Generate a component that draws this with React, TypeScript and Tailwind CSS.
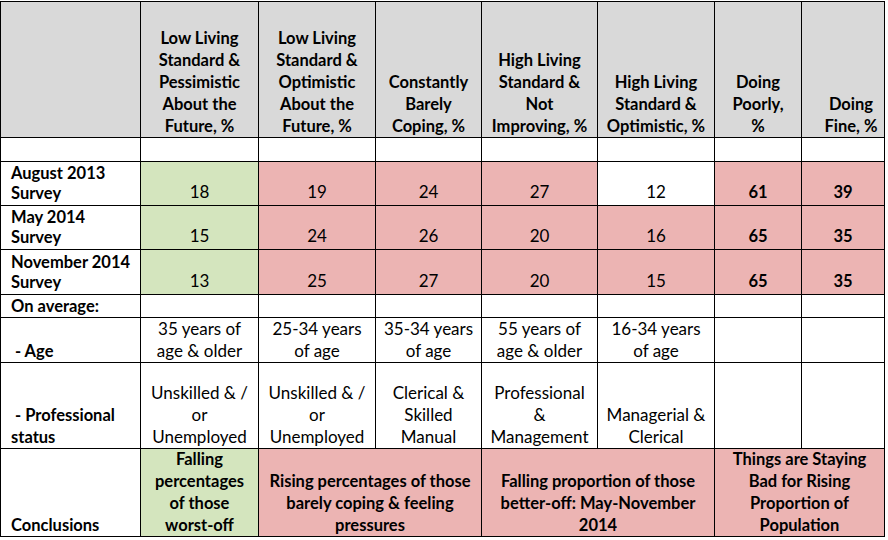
import React from "react";

const GRAY = "bg-[#d9d9d9]";
const GREEN = "bg-[#d4e5be]";
const PINK = "bg-[#ecb4b3]";
const WHITE = "bg-white";

const headers: string[][] = [
    ["Low Living", "Standard &", "Pessimistic", "About the", "Future, %"],
    ["Low Living", "Standard &", "Optimistic", "About the", "Future, %"],
    ["Constantly", "Barely", "Coping, %"],
    ["High Living", "Standard &", "Not", "Improving, %"],
    ["High Living", "Standard &", "Optimistic, %"],
    ["Doing", "Poorly,", "%"],
    ["Doing", "Fine, %"],
];

const surveys = [
    { label: ["August 2013", "Survey"], values: [18, 19, 24, 27, 12, 61, 39], colors: [GREEN, PINK, PINK, PINK, WHITE, PINK, PINK] },
    { label: ["May 2014", "Survey"], values: [15, 24, 26, 20, 16, 65, 35], colors: [GREEN, PINK, PINK, PINK, PINK, PINK, PINK] },
    { label: ["November 2014", "Survey"], values: [13, 25, 27, 20, 15, 65, 35], colors: [GREEN, PINK, PINK, PINK, PINK, PINK, PINK] },
];

const ages: string[][] = [
    ["35 years of", "age & older"],
    ["25-34 years", "of age"],
    ["35-34 years", "of age"],
    ["55 years of", "age & older"],
    ["16-34 years", "of age"],
    [],
    [],
];

const professions: string[][] = [
    ["Unskilled & /", "or", "Unemployed"],
    ["Unskilled & /", "or", "Unemployed"],
    ["Clerical &", "Skilled", "Manual"],
    ["Professional", "&", "Management"],
    ["Managerial &", "Clerical"],
    [],
    [],
];

const Lines: React.FC<{ lines: string[] }> = ({ lines }) => (
    <div>
        {lines.map((l, i) => (
            <div key={i} className="whitespace-nowrap">{l}</div>
        ))}
    </div>
);

const Cell: React.FC<{ bg?: string; className?: string; children?: React.ReactNode }> = ({ bg = WHITE, className = "", children }) => (
    <div className={`border-r border-b border-black flex items-end justify-center text-center overflow-hidden ${bg} ${className}`}>
        {children}
    </div>
);

const Label: React.FC<{ className?: string; children?: React.ReactNode }> = ({ className = "", children }) => (
    <div className={`border-r border-b border-black bg-white flex items-end pl-[10px] font-bold text-[16.5px] overflow-hidden ${className}`}>
        {children}
    </div>
);

export default function App() {
    return (
        <div className="w-[888px] h-[540px] bg-white text-black text-[17px] leading-[22px]" style={{ fontFamily: "Lato, 'Liberation Sans', sans-serif" }}>
            <div className="mt-px w-fit border-l border-t border-black grid grid-cols-[140px_118px_117px_106px_116px_117px_87px_83px] grid-rows-[136px_24px_44px_44px_45px_23px_45px_86px_88px]">
                {/* header */}
                <Cell bg={GRAY} />
                {headers.map((h, i) => (
                    <Cell key={i} bg={GRAY} className={`font-bold text-[16.5px] ${i === 6 ? "pl-4" : ""}`}>
                        <Lines lines={h} />
                    </Cell>
                ))}

                {/* spacer row */}
                {Array.from({ length: 8 }).map((_, i) =>
                    i === 0 ? <Label key={i} /> : <Cell key={i} />
                )}

                {/* survey rows */}
                {surveys.map((s, r) => (
                    <React.Fragment key={r}>
                        <Label className="leading-[20px] pb-[2px]">
                            <Lines lines={s.label} />
                        </Label>
                        {s.values.map((v, i) => (
                            <Cell key={i} bg={s.colors[i]} className={`pb-[2px] ${i >= 5 ? "font-bold text-[16.5px]" : ""}`}>
                                {v}
                            </Cell>
                        ))}
                    </React.Fragment>
                ))}

                {/* on average */}
                <Label>On average:</Label>
                {Array.from({ length: 7 }).map((_, i) => (
                    <Cell key={i} />
                ))}

                {/* age */}
                <Label className="pl-[14px]">- Age</Label>
                {ages.map((a, i) => (
                    <Cell key={i}>
                        <Lines lines={a} />
                    </Cell>
                ))}

                {/* professional status */}
                <Label>
                    <Lines lines={["\u00a0- Professional", "status"]} />
                </Label>
                {professions.map((p, i) => (
                    <Cell key={i}>
                        <Lines lines={p} />
                    </Cell>
                ))}

                {/* conclusions */}
                <Label>Conclusions</Label>
                <Cell bg={GREEN} className="font-bold text-[16.5px]">
                    <Lines lines={["Falling", "percentages", "of those", "worst-off"]} />
                </Cell>
                <Cell bg={PINK} className="col-span-2 font-bold text-[16.5px]">
                    <Lines lines={["Rising percentages of those", "barely coping & feeling", "pressures"]} />
                </Cell>
                <Cell bg={PINK} className="col-span-2 font-bold text-[16.5px]">
                    <Lines lines={["Falling proportion of those", "better-off: May-November", "2014"]} />
                </Cell>
                <Cell bg={PINK} className="col-span-2 font-bold text-[16.5px]">
                    <Lines lines={["Things are Staying", "Bad for Rising", "Proportion of", "Population"]} />
                </Cell>
            </div>
        </div>
    );
}
